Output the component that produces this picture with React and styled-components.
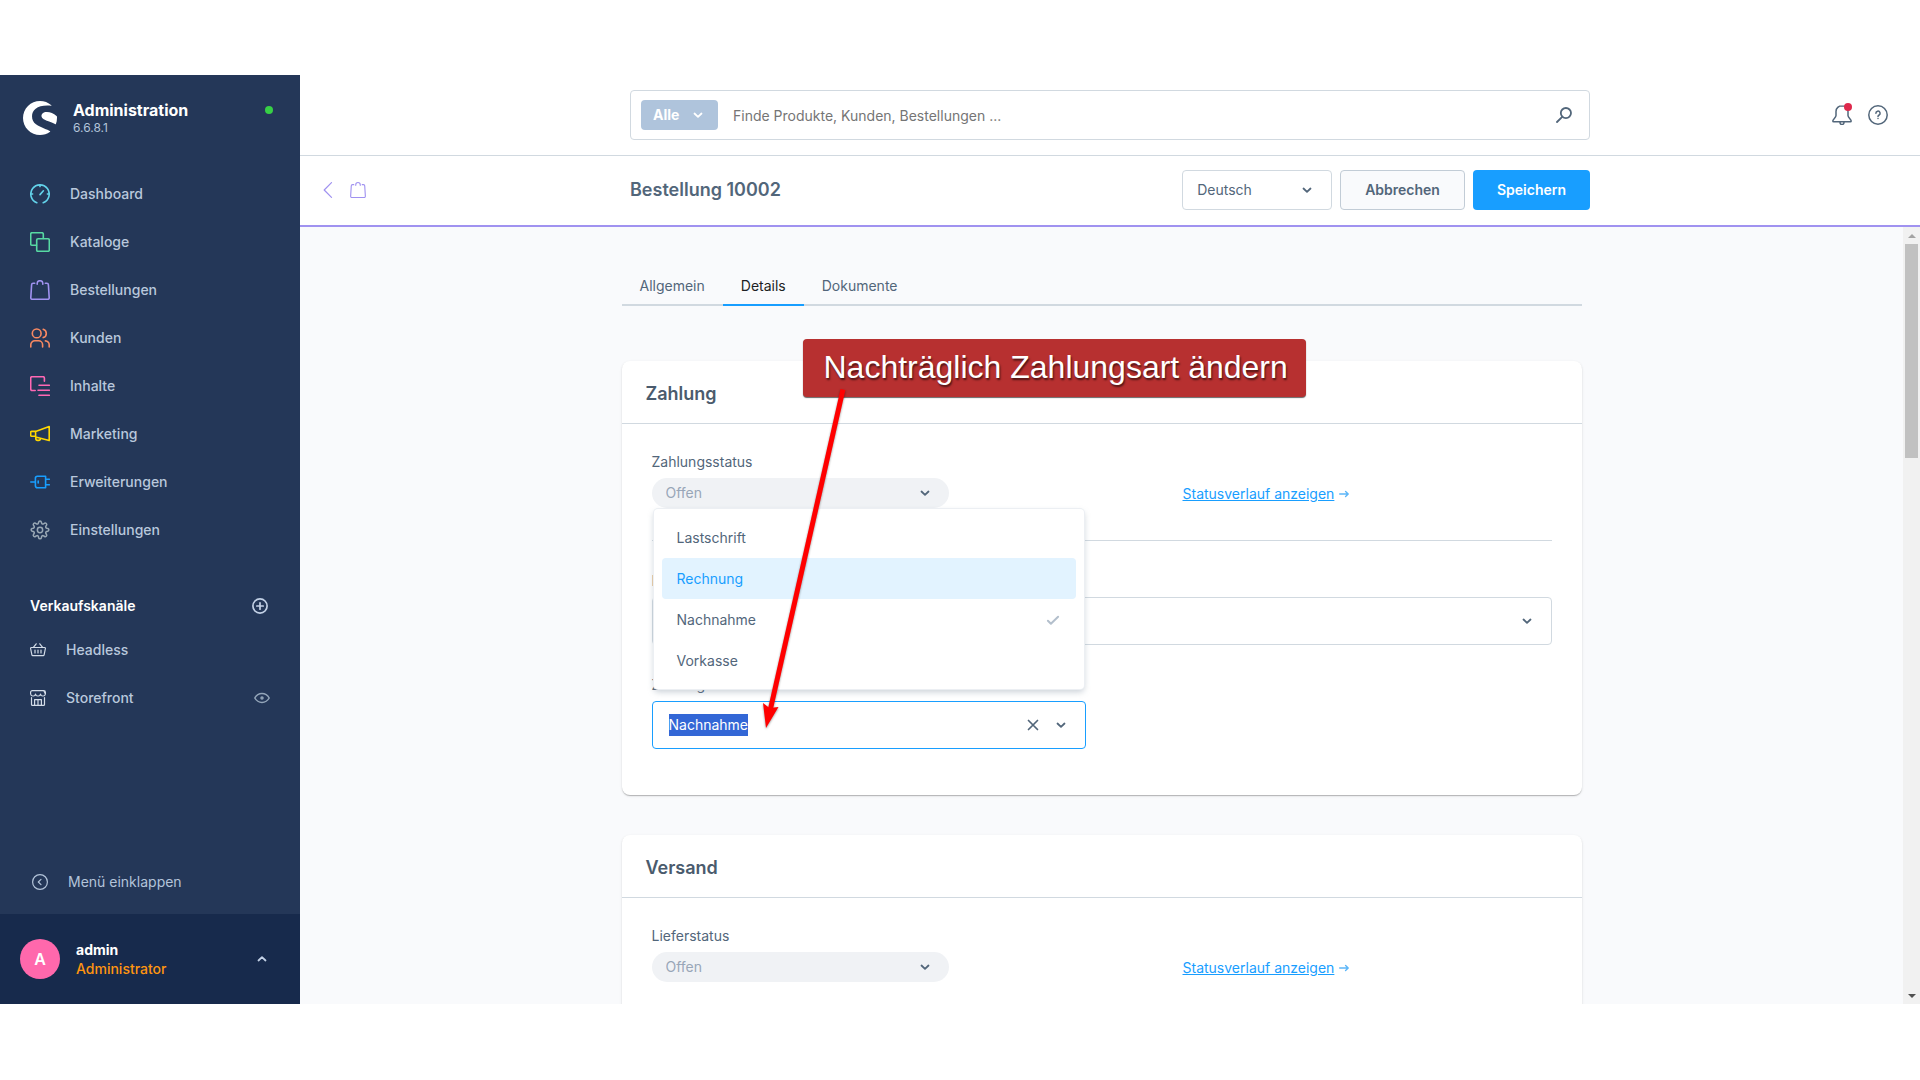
import React, { useEffect, useRef } from 'react'
import styled, { createGlobalStyle } from 'styled-components'
import { SiShopware } from 'react-icons/si'

const GlobalStyle = createGlobalStyle`
  * {
    box-sizing: border-box;
  }

  body {
    margin: 0;
    background: #ffffff;
    color: #52667a;
    font-family: Inter, 'Liberation Sans', sans-serif;
    font-size: 14px;
    line-height: 20px;
  }

  button,
  input,
  select {
    font: inherit;
    color: inherit;
    margin: 0;
  }
`

const Icon = ({ size = 20, box = 20, stroke = 1.4, color = 'currentColor', children }) => (
  <svg
    width={size}
    height={size}
    viewBox={`0 0 ${box} ${box}`}
    fill="none"
    stroke={color}
    strokeWidth={stroke}
    strokeLinecap="round"
    strokeLinejoin="round"
    aria-hidden="true"
  >
    {children}
  </svg>
)

const DashboardIcon = () => (
  <Icon color="#63d3ea" stroke={1.6}>
    <path d="M6.8 18.7A9.2 9.2 0 1 1 13.2 18.7" />
    <path d="M10 1v1.6M1 10h1.6M17.4 10H19M10 10.6l3.4-3.8" />
  </Icon>
)

const CatalogIcon = () => (
  <Icon color="#57d9a3" stroke={1.6}>
    <rect x="6.7" y="6.7" width="12.6" height="12.6" rx="1.4" />
    <path d="M6.5 13.3H2.1a1.4 1.4 0 0 1-1.4-1.4V2.1A1.4 1.4 0 0 1 2.1.7h9.8a1.4 1.4 0 0 1 1.4 1.4v4.4" />
  </Icon>
)

const BagIcon = ({ size, stroke = 1.6 }) => (
  <Icon color="#a092f0" size={size} stroke={stroke}>
    <path d="M4.7 3.3H3.1a1.5 1.5 0 0 0-1.5 1.4L.8 17.8a1.4 1.4 0 0 0 1.4 1.5h15.6a1.4 1.4 0 0 0 1.4-1.5l-.8-13.1a1.5 1.5 0 0 0-1.5-1.4h-1.6" />
    <path d="M7.2 4.2V3.3c0-1.6 1.2-2.6 2.8-2.6s2.8 1 2.8 2.6v.9" />
  </Icon>
)

const UsersIcon = () => (
  <Icon color="#f88962" stroke={1.6}>
    <circle cx="6.7" cy="5.4" r="4.4" />
    <path d="M.8 19v-2.2a4 4 0 0 1 4-4h3.8a4 4 0 0 1 4 4V19" />
    <path d="M13.2 1.2a4.4 4.4 0 0 1 0 8.4M15.4 12.9a4 4 0 0 1 3.8 4V19" />
  </Icon>
)

const ContentIcon = () => (
  <Icon color="#ff68b4" stroke={1.6}>
    <path d="M5.2 14.5H2.1a1.4 1.4 0 0 1-1.4-1.4V2.1A1.4 1.4 0 0 1 2.1.7H13a1.4 1.4 0 0 1 1.4 1.4v3.2M9 9.3h10.3M8 14.3h11.3M9 19.3h10.3" />
  </Icon>
)

const MarketingIcon = () => (
  <Icon color="#ffd700" stroke={1.6}>
    <path d="M19.2 2.6v14L5.6 13V7.4zM5.6 7.4H1.6a.9.9 0 0 0-.9.9v3.1a1 1 0 0 0 .9.9h4M5.8 13.2v1.4a1.8 1.8 0 0 0 1.8 1.8h1a1.8 1.8 0 0 0 1.8-1.8v-.3" />
  </Icon>
)

const PlugIcon = () => (
  <Icon color="#189eff" stroke={1.6}>
    <path d="M15.6 4.2H7.4a2 2 0 0 0-2 2.2v7.2a2 2 0 0 0 2 2.2h8.2zM.8 10h4.4M15.8 7.2h3.5M15.8 12.8h3.5M8.2 9v2" />
  </Icon>
)

const GearIcon = () => (
  <Icon color="#9aa8b5" box={24} stroke={1.8}>
    <circle cx="12" cy="12" r="3.2" />
    <path d="M10.4 2.4c.3-1.5 2.9-1.5 3.2 0l.3 1.3c.3 1.1 1.4 1.5 2.4.9l1.3-.8c1.3-.8 3.1 1 2.3 2.3l-.8 1.3c-.6 1-.1 2.1.9 2.4l1.5.4c1.5.4 1.5 2.8 0 3.2l-1.5.4c-1 .3-1.5 1.4-.9 2.4l.8 1.3c.8 1.3-1 3.1-2.3 2.3l-1.3-.8c-1-.6-2.1-.2-2.4.9l-.3 1.5c-.3 1.500-2.900 1.500-3.200 0l-.3-1.500c-.3-1.100-1.400-1.500-2.400-.9l-1.300.8c-1.300.8-3.100-1-2.300-2.300l.8-1.300c.6-1 .1-2.100-.9-2.400l-1.500-.4c-1.500-.4-1.500-2.800 0-3.200l1.500-.4c1-.3 1.500-1.400.9-2.400l-.8-1.300c-.8-1.300 1-3.100 2.300-2.300l1.300.8c1 .6 2.100.2 2.400-.9z" />
  </Icon>
)

const BasketIcon = () => (
  <Icon color="#d3dce8" size={16} box={16} stroke={1.2}>
    <path d="M1.3 5.5h13.4a.8.8 0 0 1 .7 1l-1.3 6.3a1 1 0 0 1-1 .8H2.9a1 1 0 0 1-1-.8L.6 6.500a.8.8 0 0 1 .7-1zM3.400 5.300l2.800-3.500M12.600 5.300L9.800 1.800M5 8v3M8 8v3M11 8v3" />
  </Icon>
)

const StoreIcon = () => (
  <Icon color="#d3dce8" size={16} box={16} stroke={1.2}>
    <path d="M1.500 7.600v6.800a1 1 0 0 0 1 1h11a1 1 0 0 0 1-1V7.600M2.300.6h11.400L15.400 4a2.400 2.400 0 0 1-2.400 2 2.400 2.400 0 0 1-2.500-2A2.400 2.400 0 0 1 8 6a2.400 2.400 0 0 1-2.500-2A2.400 2.400 0 0 1 3 6 2.400 2.400 0 0 1 .6 4V2.300A1.700 1.700 0 0 1 2.300.6zM15.400 4V2.300A1.700 1.700 0 0 0 13.700.6M4.600 15.300V9.600h6.800v5.700M8 9.600v5.700" />
  </Icon>
)

const EyeIcon = () => (
  <Icon color="#93a5b9" size={16} box={16} stroke={1.5}>
    <path d="M.8 8S3.300 3.600 8 3.600 15.200 8 15.200 8 12.700 12.400 8 12.400.8 8 .8 8z" />
    <circle cx="8" cy="8" r="1" />
  </Icon>
)

const PlusCircleIcon = () => (
  <Icon color="#c3d1e6" size={16} box={16} stroke={1.7}>
    <circle cx="8" cy="8" r="7.1" />
    <path d="M8 4.800v6.400M4.800 8h6.400" />
  </Icon>
)

const CollapseIcon = () => (
  <Icon color="#b3c4da" size={16} box={16} stroke={1.2}>
    <circle cx="8" cy="8" r="7.400" />
    <path d="M9 5.400L6.300 8 9 10.600" />
  </Icon>
)

const ChevronIcon = ({ up }) => (
  <Icon size={10} box={10} stroke={1.8}>
    <path d={up ? 'M1.5 6.5L5 3.2l3.5 3.3' : 'M1.5 3.5L5 6.8l3.5-3.3'} />
  </Icon>
)

const BackIcon = () => (
  <Icon color="#a092f0" size={16} box={16} stroke={1.2}>
    <path d="M11.5.6L4.200 8l7.300 7.400" />
  </Icon>
)

const SearchIcon = () => (
  <Icon size={16} box={16} stroke={1.8}>
    <circle cx="9.9" cy="6.1" r="5.1" />
    <path d="M6.2 9.8L1 15" />
  </Icon>
)

const BellIcon = () => (
  <Icon stroke={1.5}>
    <path d="M10 .8c-3.300 0-6 2.400-6 5.600v4.200c0 2-3.200 3.500-3.200 5.300 0 .6.300.9.900.9h16.600c.6 0 .9-.3.900-.9 0-1.800-3.200-3.300-3.200-5.300V6.400C16 3.200 13.300.8 10 .8zM8 17.500a2 2 0 0 0 4 0" />
  </Icon>
)

const HelpIcon = () => (
  <Icon stroke={1.5}>
    <circle cx="10" cy="10" r="9.200" />
    <path d="M7.900 8.300a2.100 2.100 0 1 1 3.200 1.700c-.7.4-1.100.8-1.100 1.500M10 13.500v.1" />
  </Icon>
)

const CheckIcon = () => (
  <Icon color="#b3bfcc" size={14} box={14} stroke={2}>
    <path d="M1.900 7.800l3 3 7.200-7" />
  </Icon>
)

const CloseIcon = () => (
  <Icon size={12} box={12} stroke={1.7}>
    <path d="M1.500 1.500l9 9M10.500 1.500l-9 9" />
  </Icon>
)

const ArrowRightIcon = () => (
  <Icon color="#5db6f8" size={10} box={10} stroke={1.4}>
    <path d="M.7 5h8.400M6.600 2.500L9.200 5 6.600 7.500" />
  </Icon>
)

const navItems = [
  { label: 'Dashboard', icon: <DashboardIcon /> },
  { label: 'Kataloge', icon: <CatalogIcon /> },
  { label: 'Bestellungen', icon: <BagIcon /> },
  { label: 'Kunden', icon: <UsersIcon /> },
  { label: 'Inhalte', icon: <ContentIcon /> },
  { label: 'Marketing', icon: <MarketingIcon /> },
  { label: 'Erweiterungen', icon: <PlugIcon /> },
  { label: 'Einstellungen', icon: <GearIcon /> },
]

const paymentMethods = ['Lastschrift', 'Rechnung', 'Nachnahme', 'Vorkasse']

const StatusRow = ({ id, label }) => (
  <StatusGrid>
    <Field>
      <Label htmlFor={id}>{label}</Label>
      <SelectBox>
        <StatusSelect id={id} defaultValue="Offen">
          <option>Offen</option>
        </StatusSelect>
        <SelectArrow $right="19px"><ChevronIcon /></SelectArrow>
      </SelectBox>
    </Field>
    <HistoryLink href="#statusverlauf">
      <span>Statusverlauf anzeigen</span>
      <ArrowRightIcon />
    </HistoryLink>
  </StatusGrid>
)

const Sidebar = () => (
  <SidebarWrapper>
    <Brand>
      <SiShopware size={34} color="#ffffff" />
      <div>
        <p className="title">Administration</p>
        <p className="version">6.6.8.1</p>
      </div>
      <StatusDot />
    </Brand>
    <nav>
      <NavList>
        {navItems.map(({ label, icon }) => (
          <li key={label}>
            <NavLink href="#">{icon}<span>{label}</span></NavLink>
          </li>
        ))}
      </NavList>
      <ChannelHeader>
        <h2>Verkaufskanäle</h2>
        <IconButton aria-label="Verkaufskanal hinzufügen"><PlusCircleIcon /></IconButton>
      </ChannelHeader>
      <NavList>
        <li><NavLink href="#"><BasketIcon /><span>Headless</span></NavLink></li>
        <ChannelItem>
          <NavLink href="#"><StoreIcon /><span>Storefront</span></NavLink>
          <IconButton aria-label="Storefront öffnen"><EyeIcon /></IconButton>
        </ChannelItem>
      </NavList>
    </nav>
    <CollapseButton><CollapseIcon /><span>Menü einklappen</span></CollapseButton>
    <UserBar>
      <Avatar>A</Avatar>
      <span className="user">
        <span className="name">admin</span>
        <span className="role">Administrator</span>
      </span>
      <ChevronIcon up />
    </UserBar>
  </SidebarWrapper>
)

const PaymentSelect = () => {
  const inputRef = useRef(null)

  useEffect(() => {
    inputRef.current.focus()
    inputRef.current.select()
  }, [])

  return (
    <Field>
      <Label htmlFor="payment">Zahlungsart</Label>
      <ComboBox>
        <ComboInput id="payment" ref={inputRef} defaultValue="Nachnahme" autoComplete="off" />
        <IconButton aria-label="Auswahl löschen"><CloseIcon /></IconButton>
        <IconButton aria-label="Auswahl öffnen"><ChevronIcon /></IconButton>
        <Menu role="listbox">
          {paymentMethods.map((method) => (
            <MenuItem
              key={method}
              role="option"
              aria-selected={method === 'Nachnahme'}
              $active={method === 'Rechnung'}
            >
              {method}
              {method === 'Nachnahme' && <CheckIcon />}
            </MenuItem>
          ))}
        </Menu>
      </ComboBox>
    </Field>
  )
}

const App = () => (
  <>
    <GlobalStyle />
    <Page>
      <Sidebar />
      <Main>
        <TopBar>
          <SearchBar>
            <SelectBox>
              <ScopeSelect aria-label="Suchbereich" defaultValue="Alle">
                <option>Alle</option>
              </ScopeSelect>
              <SelectArrow $right="15px" $color="#ffffff"><ChevronIcon /></SelectArrow>
            </SelectBox>
            <input aria-label="Suche" placeholder="Finde Produkte, Kunden, Bestellungen ..." />
            <IconButton aria-label="Suchen"><SearchIcon /></IconButton>
          </SearchBar>
          <TopActions>
            <IconButton aria-label="Benachrichtigungen"><BellIcon /><Badge /></IconButton>
            <IconButton aria-label="Hilfe"><HelpIcon /></IconButton>
          </TopActions>
        </TopBar>

        <PageHead>
          <HeadNav>
            <IconButton aria-label="Zurück"><BackIcon /></IconButton>
            <BagIcon size={16} stroke={1.4} />
          </HeadNav>
          <HeadContent>
            <h1>Bestellung 10002</h1>
            <SelectBox>
              <LanguageSelect aria-label="Sprache" defaultValue="Deutsch">
                <option>Deutsch</option>
              </LanguageSelect>
              <SelectArrow $right="20px"><ChevronIcon /></SelectArrow>
            </SelectBox>
            <Button>Abbrechen</Button>
            <Button $primary>Speichern</Button>
          </HeadContent>
        </PageHead>

        <Content>
          <Scroller>
            <Column>
              <Tabs role="tablist">
                <Tab role="tab">Allgemein</Tab>
                <Tab role="tab" aria-selected="true" $active>Details</Tab>
                <Tab role="tab">Dokumente</Tab>
              </Tabs>

              <Card>
                <CardHeader>Zahlung</CardHeader>
                <CardBody>
                  <StatusRow id="payment-status" label="Zahlungsstatus" />
                  <Divider />
                  <Field>
                    <Label htmlFor="address">Rechnungsadresse</Label>
                    <SelectBox>
                      <AddressSelect id="address" />
                      <SelectArrow $right="20px"><ChevronIcon /></SelectArrow>
                    </SelectBox>
                  </Field>
                  <FieldGrid>
                    <PaymentSelect />
                  </FieldGrid>
                </CardBody>
              </Card>

              <Card>
                <CardHeader>Versand</CardHeader>
                <CardBody>
                  <StatusRow id="delivery-status" label="Lieferstatus" />
                </CardBody>
              </Card>

              <Callout>Nachträglich Zahlungsart ändern</Callout>
              {/* Pfeil vom Hinweis zum Auswahlfeld */}
              <CalloutArrow width="100" height="350" viewBox="0 0 100 350" aria-hidden="true">
                <path d="M90 9.5L17 331" stroke="#ff0000" strokeWidth="5" />
                <path d="M13 348L10 323l6.500 5 9-1z" fill="#ff0000" />
              </CalloutArrow>
            </Column>
          </Scroller>
          <ScrollBar>
            <ScrollButton aria-label="Nach oben" $up />
            <ScrollThumb />
            <ScrollButton aria-label="Nach unten" />
          </ScrollBar>
        </Content>
      </Main>
    </Page>
  </>
)

export default App

const Page = styled.div`
  display: flex;
  height: 100vh;
  padding: 75px 0 76px;
`

const IconButton = styled.button`
  position: relative;
  display: flex;
  padding: 0;
  border: none;
  background: none;
  cursor: pointer;
`

/* Sidebar */

const SidebarWrapper = styled.aside`
  display: flex;
  flex-direction: column;
  flex: 0 0 300px;
  background: #243758;
  color: #b3c4da;

  nav {
    flex: 1;
  }
`

const Brand = styled.div`
  display: flex;
  align-items: center;
  gap: 16px;
  height: 95px;
  padding: 0 27px 10px 23px;

  p {
    margin: 0;
  }

  .title {
    color: #ffffff;
    font-size: 16px;
    font-weight: 700;
  }

  .version {
    font-size: 12px;
    line-height: 16px;
  }
`

const StatusDot = styled.span`
  width: 8px;
  height: 8px;
  margin: 0 0 16px auto;
  border-radius: 50%;
  background: #37d046;
`

const NavList = styled.ul`
  list-style: none;
  margin: 0;
  padding: 0;
`

const NavLink = styled.a`
  display: flex;
  align-items: center;
  flex: 1;
  gap: 20px;
  height: 48px;
  padding: 0 30px;
  color: #b9c8dc;
  font-weight: 500;
  text-decoration: none;
`

const ChannelHeader = styled.div`
  display: flex;
  align-items: center;
  justify-content: space-between;
  height: 40px;
  margin-top: 32px;
  padding: 0 32px 0 30px;

  h2 {
    margin: 0;
    color: #ffffff;
    font-size: 14px;
    font-weight: 600;
  }
`

const ChannelItem = styled.li`
  display: flex;
  align-items: center;
  padding-right: 30px;
`

const CollapseButton = styled.button`
  display: flex;
  align-items: center;
  gap: 20px;
  height: 48px;
  margin-bottom: 8px;
  padding: 0 32px;
  border: none;
  background: none;
  cursor: pointer;
`

const UserBar = styled.button`
  display: flex;
  align-items: center;
  gap: 16px;
  height: 90px;
  padding: 0 33px 0 20px;
  border: none;
  background: #172a4c;
  color: #c3d1e6;
  text-align: left;
  cursor: pointer;

  .user {
    display: flex;
    flex: 1;
    flex-direction: column;
    line-height: 19px;
  }

  .name {
    color: #ffffff;
    font-weight: 700;
  }

  .role {
    color: #ff9510;
    font-weight: 500;
  }
`

const Avatar = styled.span`
  display: flex;
  align-items: center;
  justify-content: center;
  width: 40px;
  height: 40px;
  border-radius: 50%;
  background: #ff68ac;
  color: #ffffff;
  font-size: 16px;
  font-weight: 600;
`

/* Header */

const Main = styled.main`
  display: flex;
  flex-direction: column;
  flex: 1;
  min-width: 0;
`

const TopBar = styled.header`
  display: grid;
  grid-template-columns: 1fr minmax(0, 960px) 1fr;
  align-items: center;
  flex-shrink: 0;
  height: 81px;
  border-bottom: 1px solid #d1d9e0;
`

const SearchBar = styled.div`
  display: flex;
  align-items: center;
  grid-column: 2;
  height: 50px;
  padding: 0 17px 0 10px;
  border: 1px solid #d1d9e0;
  border-radius: 4px;

  input {
    flex: 1;
    padding: 2px 15px 0;
    border: none;
    outline: none;
  }

  input::placeholder {
    color: #757575;
  }
`

const TopActions = styled.div`
  display: flex;
  justify-content: flex-end;
  gap: 16px;
  padding-right: 32px;
`

const Badge = styled.span`
  position: absolute;
  top: -2px;
  right: 0;
  width: 8px;
  height: 8px;
  border-radius: 50%;
  background: #de294c;
`

const PageHead = styled.div`
  display: grid;
  grid-template-columns: 1fr minmax(0, 960px) 1fr;
  align-items: center;
  flex-shrink: 0;
  height: 71px;
  padding-bottom: 1px;
  border-bottom: 2px solid #a092f0;
`

const HeadNav = styled.div`
  display: flex;
  align-items: center;
  gap: 14px;
  padding-left: 20px;
`

const HeadContent = styled.div`
  display: flex;
  align-items: center;
  gap: 8px;

  h1 {
    flex: 1;
    margin: 0;
    font-size: 18px;
    font-weight: 600;
    line-height: 22px;
  }
`

const Button = styled.button`
  height: 40px;
  padding: 0 24px;
  border: ${(props) => (props.$primary ? 'none' : '1px solid #c2ccd6')};
  border-radius: 4px;
  background: ${(props) => (props.$primary ? '#189eff' : '#f9fafc')};
  color: ${(props) => (props.$primary ? '#ffffff' : '#52667a')};
  font-weight: 600;
  cursor: pointer;
`

/* Selects */

const SelectBox = styled.div`
  position: relative;
  display: flex;
`

const BaseSelect = styled.select`
  appearance: none;
  width: 100%;
  border: 1px solid #d1d9e0;
  border-radius: 4px;
  outline: none;
  background: #ffffff;
`

const SelectArrow = styled.span`
  position: absolute;
  top: 0;
  right: ${(props) => props.$right};
  display: flex;
  align-items: center;
  height: 100%;
  color: ${(props) => props.$color || '#52667a'};
  pointer-events: none;
`

const ScopeSelect = styled(BaseSelect)`
  width: 77px;
  height: 30px;
  padding: 0 12px;
  border: none;
  background: #afc4dc;
  color: #ffffff;
  font-weight: 700;
`

const LanguageSelect = styled(BaseSelect)`
  width: 150px;
  height: 40px;
  padding: 0 14px;
`

const StatusSelect = styled(BaseSelect)`
  height: 30px;
  padding: 0 14px;
  border: none;
  border-radius: 15px;
  background: #f0f2f5;
  color: #98a6b8;
`

const AddressSelect = styled(BaseSelect)`
  height: 48px;
`

/* Content */

const Content = styled.div`
  display: flex;
  flex: 1;
  min-height: 0;
  background: #f9fafc;
`

const Scroller = styled.div`
  flex: 1;
  min-width: 0;
  overflow: hidden;
`

const Column = styled.div`
  position: relative;
  max-width: 960px;
  margin: 0 auto;
  padding-top: 40px;
`

const Tabs = styled.div`
  display: flex;
  margin-bottom: 55px;
  box-shadow: inset 0 -2px 0 #d1d9e0;
`

const Tab = styled.button`
  height: 39px;
  padding: 0 18px;
  border: none;
  border-bottom: 2px solid ${(props) => (props.$active ? '#189eff' : 'transparent')};
  background: none;
  color: ${(props) => (props.$active ? '#1c1f23' : '#52667a')};
  cursor: pointer;
`

const Card = styled.section`
  margin-bottom: 40px;
  border-radius: 8px;
  background: #ffffff;
  box-shadow: 0 1px 1px rgba(0, 0, 0, 0.14), 0 2px 1px -1px rgba(0, 0, 0, 0.1),
    0 1px 3px rgba(0, 0, 0, 0.1);
`

const CardHeader = styled.h2`
  display: flex;
  align-items: center;
  height: 63px;
  margin: 0;
  padding: 4px 24px 0;
  border-bottom: 1px solid #d1d9e0;
  font-size: 18px;
  font-weight: 600;
  color: #4a5b6d;
`

const CardBody = styled.div`
  padding: 28px 30px 46px;
`

const StatusGrid = styled.div`
  display: grid;
  grid-template-columns: 33% 41%;
  justify-content: space-between;
  align-items: end;
`

const HistoryLink = styled.a`
  display: flex;
  align-items: center;
  gap: 5px;
  padding-bottom: 4px;
  color: #189eff;
  text-decoration: none;

  span {
    text-decoration: underline;
  }
`

const Divider = styled.hr`
  height: 1px;
  margin: 32px 0 30px;
  border: none;
  background: #d1d9e0;
`

const Field = styled.div`
  display: flex;
  flex-direction: column;
  gap: 6px;
`

const Label = styled.label`
  align-self: flex-start;
`

const FieldGrid = styled.div`
  display: grid;
  grid-template-columns: 1fr 1fr;
  gap: 32px;
  margin-top: 30px;
`

const ComboBox = styled.div`
  position: relative;
  display: flex;
  align-items: center;
  gap: 17px;
  height: 48px;
  padding: 0 19px 0 16px;
  border: 1px solid #189eff;
  border-radius: 4px;
`

const ComboInput = styled.input`
  flex: 1;
  min-width: 0;
  padding: 0;
  border: none;
  outline: none;
  line-height: 22px;

  &::selection {
    background: #3367d6;
    color: #ffffff;
  }
`

const Menu = styled.ul`
  position: absolute;
  right: 1px;
  bottom: 59px;
  left: 1px;
  z-index: 1;
  list-style: none;
  margin: 0;
  padding: 8px;
  border-radius: 4px;
  background: #ffffff;
  box-shadow: 0 0 0 1px #eceff3, 0 3px 6px rgba(120, 138, 155, 0.4);
`

const MenuItem = styled.li`
  display: flex;
  align-items: center;
  justify-content: space-between;
  height: 41px;
  padding: 0 16px 0 15px;
  border-radius: 4px;
  background: ${(props) => (props.$active ? '#e2f3ff' : 'transparent')};
  color: ${(props) => (props.$active ? '#189eff' : '#52667a')};
`

/* Callout over the cards */

const Callout = styled.div`
  position: absolute;
  top: 112px;
  left: 181px;
  z-index: 2;
  padding: 10px 18px 12px 21px;
  border-radius: 4px;
  background: #b73030;
  box-shadow: 0 1px 1px rgba(0, 0, 0, 0.6);
  color: #ffffff;
  font-family: 'Liberation Sans', sans-serif;
  font-size: 32px;
  line-height: 36px;
  text-shadow: 1px 2px 2px rgba(0, 0, 0, 0.6);
  white-space: nowrap;
`

const CalloutArrow = styled.svg`
  position: absolute;
  top: 153px;
  left: 131px;
  z-index: 3;
  pointer-events: none;
  filter: drop-shadow(0 1px 1px rgba(0, 0, 0, 0.4));
`

/* Scrollbar */

const ScrollBar = styled.div`
  display: flex;
  flex-direction: column;
  width: 17px;
  padding: 0 2px;
  background: #f1f1f1;
`

const ScrollButton = styled.button`
  flex: 0 0 17px;
  display: flex;
  align-items: center;
  justify-content: center;
  margin-top: ${(props) => (props.$up ? '0' : 'auto')};
  padding: 0;
  border: none;
  background: none;

  &::before {
    content: '';
    border: 4px solid transparent;
    border-top: ${(props) => (props.$up ? '0' : '4px solid #505050')};
    border-bottom: ${(props) => (props.$up ? '4px solid #a3a3a3' : '0')};
  }
`

const ScrollThumb = styled.div`
  flex: 0 1 214px;
  background: #c1c1c1;
`
